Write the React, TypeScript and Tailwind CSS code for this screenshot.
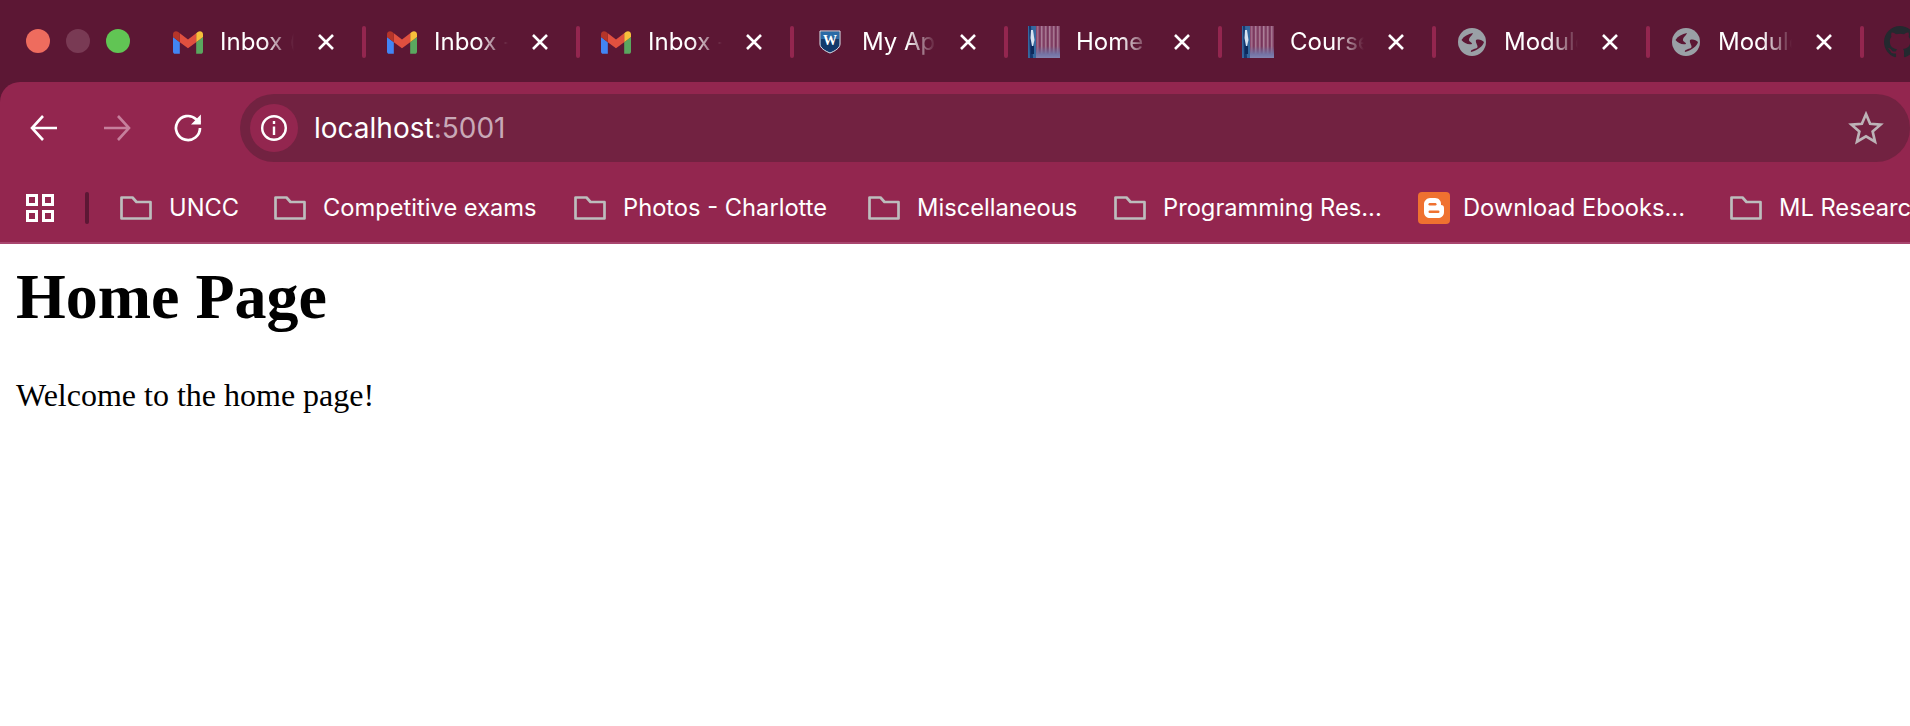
import React from "react";

const sans = "font-['Inter','Liberation_Sans',sans-serif]";

function Gmail() {
  return (
    <svg width="30" height="23" viewBox="52 42 88 66" className="shrink-0">
      <path fill="#4285f4" d="M58 108h14V74L52 59v43c0 3.32 2.69 6 6 6" />
      <path fill="#5aa75f" d="M120 108h14c3.32 0 6-2.69 6-6V59l-20 15" />
      <path fill="#f6bf3b" d="M120 48v26l20-15v-8c0-7.42-8.47-11.65-14.4-7.2" />
      <path fill="#e0503f" d="M72 74V48l24 18 24-18v26L96 92" />
      <path fill="#b5352a" d="M52 51v8l20 15V48l-5.6-4.2c-5.94-4.45-14.4-.22-14.4 7.2" />
    </svg>
  );
}

function Shield() {
  return (
    <svg width="22" height="24" viewBox="0 0 22 24" className="shrink-0">
      <path d="M1 1h20v13c0 4-5 7-10 9C6 21 1 18 1 14z" fill="#12396b" stroke="#dfe6ee" strokeWidth="1" />
      <path d="M2 2h18v7H2z" fill="#2a6aa6" />
      <text x="11" y="15" textAnchor="middle" fontFamily="'Liberation Serif',serif" fontWeight="700" fontSize="14" fill="#fff">W</text>
    </svg>
  );
}

const stripes: [number, string][] = [
  [9, "#a06a88"], [11, "#7a3a5e"], [13, "#a87c96"], [15, "#7f4064"], [17, "#a5768f"], [19, "#76365a"],
  [21, "#ab8098"], [23, "#7f4064"], [25, "#a5768f"], [27, "#76365a"], [29, "#a5768f"], [31, "#7f4064"],
];

function Thumb() {
  return (
    <svg width="32" height="32" viewBox="0 0 32 32" className="shrink-0">
      <defs>
        <filter id="thumb-blur" x="0" y="0" width="1" height="1">
          <feGaussianBlur stdDeviation="0.7" />
        </filter>
        <linearGradient id="thumb-foot" x1="0" y1="0" x2="0" y2="1">
          <stop offset="0" stopColor="#6a6a9a" stopOpacity="0" />
          <stop offset="0.7" stopColor="#7474a6" />
          <stop offset="1" stopColor="#8484b0" />
        </linearGradient>
      </defs>
      <g filter="url(#thumb-blur)">
        <rect x="0" y="0" width="8" height="32" fill="#34679f" />
        <path d="M1 0h2l2 32H2z" fill="#17386f" />
        <path d="M3 4h2l1.5 10-1.5 6H4L2.5 12z" fill="#d7e3f0" />
        <rect x="3" y="20" width="3" height="8" fill="#0d2a5c" />
        <rect x="8" y="0" width="24" height="32" fill="#8a4a6e" />
        {stripes.map(([x, c]) => (
          <rect key={x} x={x} y="0" width="1.4" height="28" fill={c} />
        ))}
        <rect x="8" y="20" width="24" height="12" fill="url(#thumb-foot)" />
      </g>
    </svg>
  );
}

function Globe() {
  return (
    <svg width="28" height="28" viewBox="0 0 28 28" className="shrink-0">
      <circle cx="14" cy="14" r="14" fill="#9aa0a6" />
      <path d="M3.500 12C6 8 10 6 15 5c-1 3-4 4-4 7 0 2 3 2 3 4-4 1-8-1-10.500-4z" fill="#5c1734" />
      <path d="M18 12c3-1 6 0 8 2-1 4-6 8-13 10-1-2 3-3 6-4 2-2-2-5-1-8z" fill="#5c1734" />
    </svg>
  );
}

function Github() {
  return (
    <svg width="32" height="32" viewBox="0 0 16 16" className="shrink-0" fill="#24292f">
      <path d="M8 0C3.58 0 0 3.58 0 8c0 3.54 2.29 6.53 5.47 7.59.4.07.55-.17.55-.38 0-.19-.01-.82-.01-1.49-2.01.37-2.53-.49-2.69-.94-.09-.23-.48-.94-.82-1.13-.28-.15-.68-.52-.01-.53.63-.01 1.08.58 1.23.82.72 1.21 1.87.87 2.33.66.07-.52.28-.87.51-1.07-1.78-.2-3.64-.89-3.64-3.95 0-.87.31-1.59.82-2.15-.08-.2-.36-1.02.08-2.12 0 0 .67-.21 2.2.82.64-.18 1.32-.27 2-.27.68 0 1.36.09 2 .27 1.53-1.04 2.2-.82 2.2-.82.44 1.1.16 1.92.08 2.12.51.56.82 1.27.82 2.15 0 3.07-1.87 3.75-3.65 3.95.29.25.54.73.54 1.48 0 1.07-.01 1.93-.01 2.2 0 .21.15.46.55.38A8.013 8.013 0 0016 8c0-4.42-3.58-8-8-8z" />
    </svg>
  );
}

function Close() {
  return (
    <svg width="18" height="18" viewBox="0 0 18 18" className="shrink-0" stroke="#fff" strokeWidth="2.6">
      <path d="M2 2l14 14M16 2L2 16" />
    </svg>
  );
}

function Folder() {
  return (
    <svg width="32" height="24" viewBox="0 0 32 24" fill="none" stroke="#bdbdbd" strokeWidth="2.7" className="shrink-0">
      <path d="M1.500 22.500V1.500h11l4 4.500h14v16.500z" strokeLinejoin="round" />
    </svg>
  );
}

function Blogger() {
  return (
    <svg width="32" height="32" viewBox="0 0 32 32" className="shrink-0">
      <rect width="32" height="32" rx="4" fill="#ef7130" />
      <path d="M12 6h5c4 0 6 3 6 6v1c2 0 3 1 3 3v4c0 4-3 6-6 6h-8c-3 0-6-2-6-6v-8c0-3 3-6 6-6z" fill="#fff" />
      <rect x="10.500" y="11" width="8" height="2.400" rx="1.200" fill="#ef7130" />
      <rect x="10.500" y="18.500" width="11" height="2.400" rx="1.200" fill="#ef7130" />
    </svg>
  );
}

const tabs: { icon: React.ReactNode; title: string }[] = [
  { icon: <Gmail />, title: "Inbox (" },
  { icon: <Gmail />, title: "Inbox -" },
  { icon: <Gmail />, title: "Inbox -" },
  { icon: <Shield />, title: "My App" },
  { icon: <Thumb />, title: "Home" },
  { icon: <Thumb />, title: "Courses" },
  { icon: <Globe />, title: "Module" },
  { icon: <Globe />, title: "Module" },
];

function Tab({ icon, title }: { icon: React.ReactNode; title: string }) {
  return (
    <div className="flex h-[32px] w-[214px] shrink-0 items-center">
      <div className="ml-[20px] flex w-[32px] shrink-0 items-center justify-center">{icon}</div>
      <div className="ml-[16px] w-[74px] shrink-0 whitespace-nowrap text-[24px] leading-[32px] text-white [mask-image:linear-gradient(to_right,#000_60%,transparent_100%)]">
        {title}
      </div>
      <div className="ml-[23px] flex w-[18px] shrink-0 justify-center">
        <Close />
      </div>
      <div className="ml-[27px] h-[32px] w-[4px] shrink-0 rounded-sm bg-[#93264f]" />
    </div>
  );
}

const bookmarks: { label: string; w: string; blogger?: boolean }[] = [
  { label: "UNCC", w: "w-[69px]" },
  { label: "Competitive exams", w: "w-[215px]" },
  { label: "Photos - Charlotte", w: "w-[209px]" },
  { label: "Miscellaneous", w: "w-[161px]" },
  { label: "Programming Res...", w: "w-[219px]" },
  { label: "Download Ebooks...", w: "w-[231px]", blogger: true },
  { label: "ML Research", w: "w-[140px]" },
];

export default function App() {
  return (
    <div className="min-h-[726px] w-[1910px] overflow-hidden bg-white">
      <header className={`${sans} h-[244px] bg-[#5c1734]`}>
        <div className="flex h-[82px] items-start pt-[26px]">
          <div className="flex h-[30px] w-[152px] shrink-0 items-center gap-[16px] pl-[26px]">
            <span className="h-[24px] w-[24px] rounded-full bg-[#ee6c5e]" />
            <span className="h-[24px] w-[24px] rounded-full bg-[#793a54]" />
            <span className="h-[24px] w-[24px] rounded-full bg-[#61c554]" />
          </div>
          {tabs.map((t, i) => (
            <Tab key={i} icon={t.icon} title={t.title} />
          ))}
          <div className="ml-[20px] shrink-0">
            <Github />
          </div>
        </div>
        <div className="flex h-[80px] items-center rounded-tl-[20px] bg-[#93264f] pt-[12px]">
          <div className="flex w-[240px] shrink-0 items-center pl-[29px]">
            <svg width="30" height="30" viewBox="0 0 30 30" fill="none" stroke="#fff" strokeWidth="2.6" className="shrink-0">
              <path d="M28 15H3M14 3L3 15l11 12" />
            </svg>
            <svg width="30" height="30" viewBox="0 0 30 30" fill="none" stroke="#c67f9c" strokeWidth="2.6" className="ml-[43px] shrink-0">
              <path d="M2 15h25M16 3l11 12-11 12" />
            </svg>
            <svg width="36" height="36" viewBox="0 0 24 24" fill="none" stroke="#fff" strokeWidth="1.800" className="ml-[38px] shrink-0">
              <path d="M20 12a8 8 0 1 1-2.600-5.900L20 8.500" />
              <path d="M20.600 3v6.600H14" fill="#fff" stroke="none" />
            </svg>
          </div>
          <div className="flex h-[68px] flex-1 items-center rounded-l-[34px] rounded-r-[34px] bg-[#722241] pl-[10px] pr-[25px]">
            <div className="flex h-[48px] w-[48px] shrink-0 items-center justify-center rounded-full bg-[#93264f]">
              <svg width="28" height="28" viewBox="0 0 28 28" fill="none" stroke="#fff" strokeWidth="2.400">
                <circle cx="14" cy="14" r="11.800" />
                <path d="M14 12.500V21" />
                <path d="M14 7v3" />
              </svg>
            </div>
            <div className="ml-[16px] text-[28px] leading-[36px] text-white">
              localhost<span className="text-[#c9a9b7]">:5001</span>
            </div>
            <svg width="38" height="38" viewBox="0 0 24 24" fill="none" stroke="#bdb3b7" strokeWidth="1.700" strokeLinejoin="miter" className="ml-auto shrink-0">
              <path d="M12 3.200l2.600 6.100 6.600.6-5 4.300 1.500 6.500L12 17.300l-5.700 3.400 1.500-6.500-5-4.300 6.600-.6z" />
            </svg>
          </div>
        </div>
        <div className="flex h-[82px] items-center overflow-hidden border-b-2 border-[#a8466f] bg-[#93264f] pt-[12px]">
          <svg width="28" height="28" viewBox="0 0 28 28" fill="none" stroke="#fff" strokeWidth="3" className="ml-[26px] shrink-0">
            <rect x="1.500" y="1.500" width="9" height="9" />
            <rect x="17.500" y="1.500" width="9" height="9" />
            <rect x="1.500" y="17.500" width="9" height="9" />
            <rect x="17.500" y="17.500" width="9" height="9" />
          </svg>
          <div className="ml-[31px] mr-[31px] h-[32px] w-[4px] shrink-0 rounded-sm bg-[#5c1734]" />
          {bookmarks.map((b) => (
            <div key={b.label} className={`mr-[36px] flex shrink-0 items-center ${b.blogger ? "gap-[13px]" : "gap-[17px]"}`}>
              {b.blogger ? <Blogger /> : <Folder />}
              <span className={`${b.w} whitespace-nowrap text-[23.7px] leading-[32px] text-white`}>{b.label}</span>
            </div>
          ))}
        </div>
      </header>
      <main className="px-[16px] pt-[16px] font-['Liberation_Serif',serif] text-black">
        <h1 className="text-[64px] font-bold leading-[74px]">Home Page</h1>
        <p className="mt-[43px] text-[32px] leading-[37px]">Welcome to the home page!</p>
      </main>
    </div>
  );
}
